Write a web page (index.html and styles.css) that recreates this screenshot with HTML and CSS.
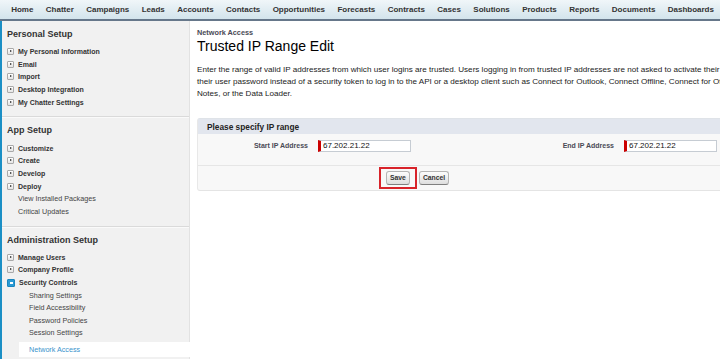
FILE: index.html
```html
<!DOCTYPE html>
<html lang="en">
	<head>
	<meta charset="UTF-8" />
	<title>Trusted IP Range Edit</title>
	<link rel="stylesheet" href="styles.css">
	</head>
	<body>
		<nav class="tabs">
			<a href="#">Home</a>
			<a href="#">Chatter</a>
			<a href="#">Campaigns</a>
			<a href="#">Leads</a>
			<a href="#">Accounts</a>
			<a href="#">Contacts</a>
			<a href="#">Opportunities</a>
			<a href="#">Forecasts</a>
			<a href="#">Contracts</a>
			<a href="#">Cases</a>
			<a href="#">Solutions</a>
			<a href="#">Products</a>
			<a href="#">Reports</a>
			<a href="#">Documents</a>
			<a href="#">Dashboards</a>
		</nav>
		<div class="layout">
			<aside class="sidebar">
				<div class="section">
					<h3>Personal Setup</h3>
					<ul>
						<li class="node"><span class="twisty"></span>My Personal Information</li>
						<li class="node"><span class="twisty"></span>Email</li>
						<li class="node"><span class="twisty"></span>Import</li>
						<li class="node"><span class="twisty"></span>Desktop Integration</li>
						<li class="node"><span class="twisty"></span>My Chatter Settings</li>
					</ul>
				</div>
				<div class="section">
					<h3>App Setup</h3>
					<ul>
						<li class="node"><span class="twisty"></span>Customize</li>
						<li class="node"><span class="twisty"></span>Create</li>
						<li class="node"><span class="twisty"></span>Develop</li>
						<li class="node"><span class="twisty"></span>Deploy</li>
						<li class="leaf">View Installed Packages</li>
						<li class="leaf">Critical Updates</li>
					</ul>
				</div>
				<div class="section last">
					<h3>Administration Setup</h3>
					<ul>
						<li class="node"><span class="twisty"></span>Manage Users</li>
						<li class="node"><span class="twisty"></span>Company Profile</li>
						<li class="node"><span class="twisty open"></span>Security Controls</li>
						<li class="sub">Sharing Settings</li>
						<li class="sub">Field Accessibility</li>
						<li class="sub">Password Policies</li>
						<li class="sub">Session Settings</li>
						<li class="sub current">Network Access</li>
					</ul>
				</div>
			</aside>
			<main class="content">
				<div class="crumb">Network Access</div>
				<h1>Trusted IP Range Edit</h1>
				<p class="intro">Enter the range of valid IP addresses from which user logins are trusted. Users logging in from trusted IP addresses are not asked to activate their computers to access Salesforce. They can use<br>
					their user password instead of a security token to log in to the API or a desktop client such as Connect for Outlook, Connect Offline, Connect for Office, Connect for Lotus<br>
					Notes, or the Data Loader.</p>
				<form class="block">
					<div class="block-head">Please specify IP range</div>
					<div class="fields">
						<label class="label" for="start">Start IP Address</label>
						<div class="req"><input id="start" type="text" value="67.202.21.22"></div>
						<label class="label" for="end">End IP Address</label>
						<div class="req"><input id="end" type="text" value="67.202.21.22"></div>
					</div>
					<div class="buttons">
						<span class="marked"><button type="button">Save</button></span>
						<button type="button">Cancel</button>
					</div>
				</form>
			</main>
		</div>
	</body>
</html>
```

FILE: styles.css
```css
* { box-sizing: border-box; }
html { font-family: "Liberation Sans", Arial, sans-serif; }
body { margin: 0; width: 720px; height: 359px; overflow: hidden; background: #fff; color: #222; }
ul { list-style: none; margin: 0; padding: 0; }

.tabs { display: flex; height: 21px; padding: 0 0 0 5px; align-items: center; background: linear-gradient(#f0f6f9, #d3e4ec); border-bottom: 2px solid #66778a; white-space: nowrap; }
.tabs a { font-size: 8px; font-weight: bold; color: #333; text-decoration: none; padding: 0 6.2px; }

.layout { display: flex; height: 338px; }
.sidebar { width: 190px; flex: none; background: #f1f1f1; border-left: 2px solid #1b8fc5; border-right: 1px solid #e2e2e2; }
.section { padding: 7px 0 8px 5px; border-bottom: 1px solid #dadada; box-shadow: 0 1px 0 #fafafa; }
.section.last { border-bottom: none; box-shadow: none; padding-bottom: 0; }
.section h3 { margin: 0; font-size: 9px; line-height: 12px; color: #333; }
.section ul { margin-top: 5.5px; }
.section li { display: flex; align-items: center; height: 12.6px; font-size: 7.2px; color: #444; white-space: nowrap; }
.section li.node { font-weight: bold; font-size: 7px; color: #333; }
.section li.leaf { padding-left: 11px; }
.section li.sub { padding-left: 22px; }
.section li.current { margin: 3px -1px 0 12px; padding-left: 10px; height: 15px; background: #fff; color: #3a93cc; }

.twisty { width: 7px; height: 7px; margin-right: 4px; border: 1px solid #a9a9a9; border-radius: 1px; background: linear-gradient(#fff, #e4e4e4); position: relative; }
.twisty::after { content: ""; position: absolute; left: 1.5px; top: 1px; border-left: 2.5px solid #222; border-top: 1.5px solid transparent; border-bottom: 1.5px solid transparent; }
.twisty.open { width: 8px; height: 8px; margin-right: 4px; border-color: #1a86bf; background: #2a9ad4; }
.twisty.open::after { left: 1.5px; top: 2.5px; border: none; width: 3px; height: 1.5px; background: #fff; }

.content { flex: 1; padding: 6.5px 0 0 7px; min-width: 0; }
.crumb { font-size: 7.3px; line-height: 10px; font-weight: bold; color: #4a4a56; }
h1 { margin: 0; font-size: 14px; line-height: 16px; font-weight: normal; color: #000; }
.intro { margin: 10px 0 0; font-size: 8.1px; line-height: 12px; color: #222; white-space: nowrap; }

.block { margin-top: 18px; width: 560px; background: #f8f8f8; border-top: 1px solid #dfe3e8; border-left: 1px solid #e8e8e8; border-bottom: 1px solid #e4e4e4; border-radius: 3px 0 0 3px; }
.block-head { height: 15px; padding-left: 9px; background: #e2e6ee; font-size: 8.3px; line-height: 16px; font-weight: bold; color: #222; }
.fields { display: grid; grid-template-columns: 120px 185px 121px 1fr; align-items: center; padding: 6px 0 13px; border-bottom: 1px solid #e6e6e6; }
.label { text-align: right; padding-right: 10px; font-size: 7px; font-weight: bold; color: #4a4a56; }
.req { display: flex; }
.req input { width: 93px; height: 12px; margin: 0; padding: 0 0 0 2px; border: 1px solid #c6ccd3; border-left: 3px solid #c00; font-family: "Liberation Sans", Arial, sans-serif; font-size: 8px; color: #111; background: #fff; }

.buttons { display: flex; align-items: center; padding: 0 0 0 181px; height: 24px; }
.marked { display: inline-flex; padding: 2px 5px; border: 2px solid #d8232a; }
.buttons button { height: 14px; margin: 0; padding: 0 3px; font-family: "Liberation Sans", Arial, sans-serif; font-size: 6.8px; font-weight: bold; color: #333; background: linear-gradient(#fdfdfd, #dedede); border: 1px solid #b5b5b5; border-bottom-color: #7f7f7f; border-radius: 3px; }
.buttons > button { margin-left: 2px; }
```
